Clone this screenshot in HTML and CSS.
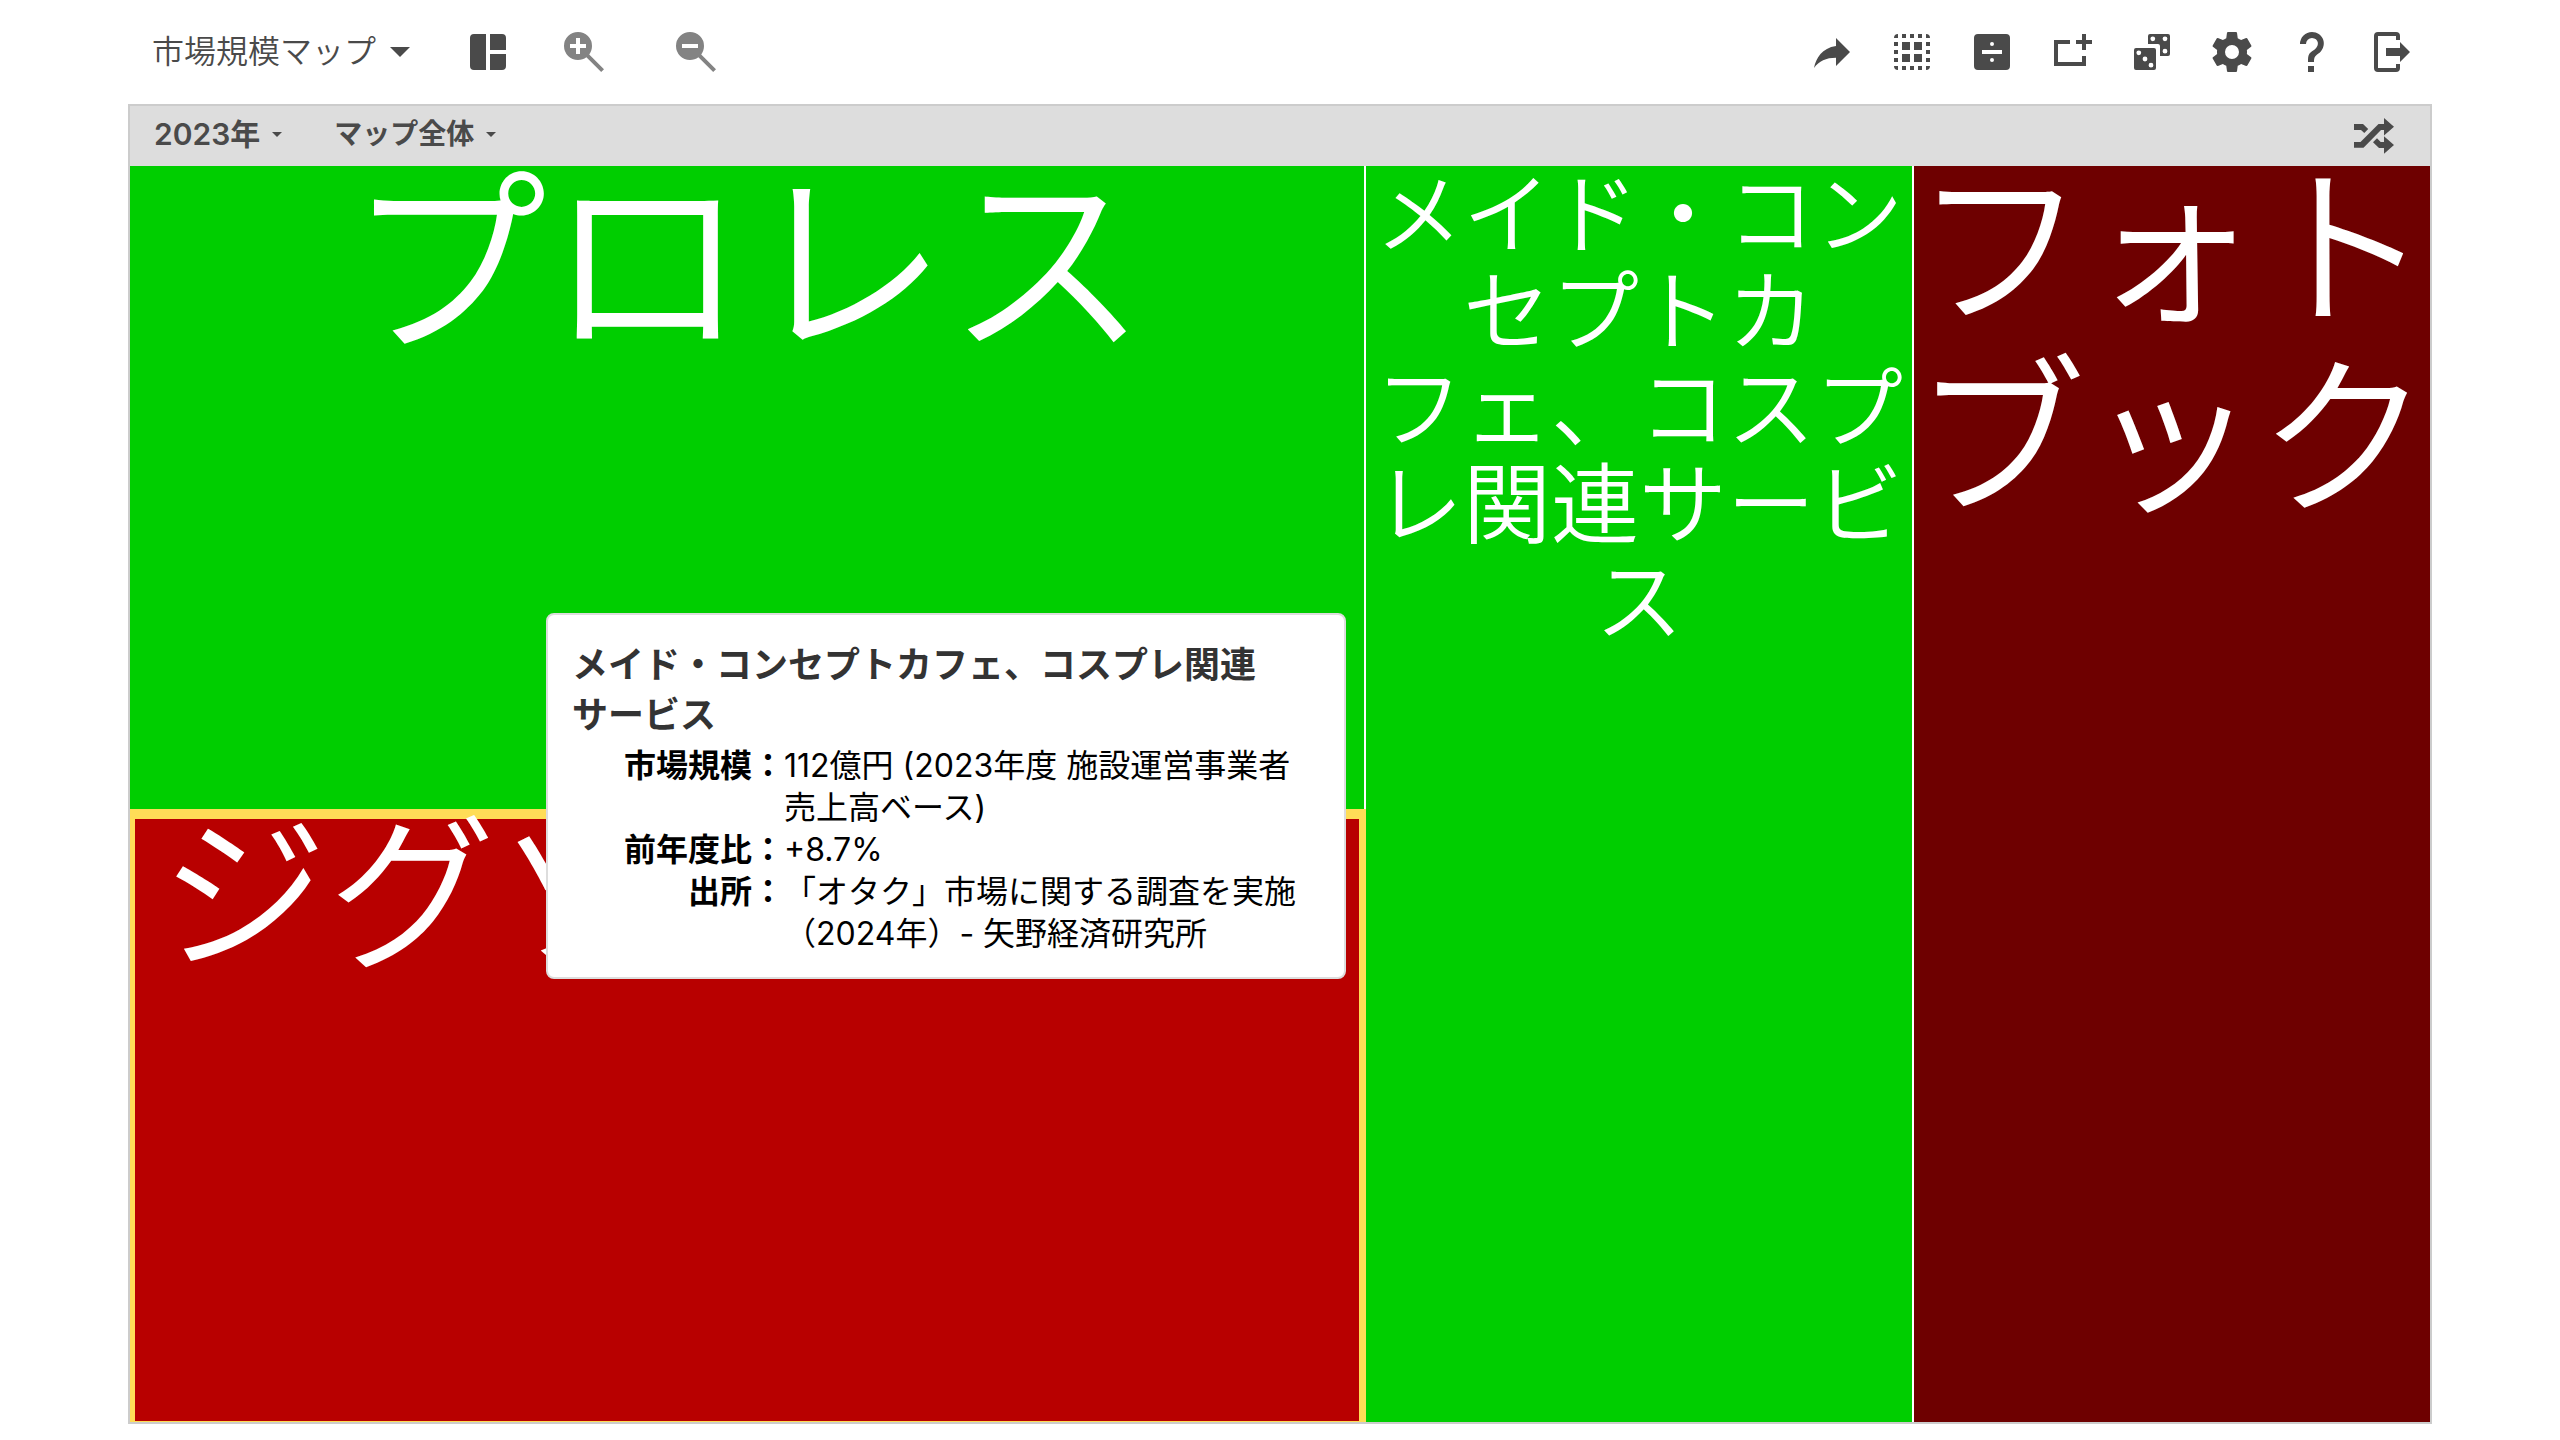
FILE: index.html
```html
<!DOCTYPE html>
<html lang="ja">
<head>
<meta charset="utf-8">
<title>市場規模マップ</title>
<link rel="stylesheet" href="styles.css">
</head>
<body>
<header class="toolbar">
  <button class="map-menu" type="button">市場規模マップ<svg class="caret" viewBox="0 0 20 10" aria-hidden="true"><path d="M0 0H20L10 10Z"/></svg></button>
  <div class="view-tools">
    <button class="icon-button" type="button" aria-label="レイアウト"><svg class="icon" viewBox="0 0 24 24"><path d="M5 3H11V21H5A2 2 0 0 1 3 19V5A2 2 0 0 1 5 3ZM13 3H19A2 2 0 0 1 21 5V11H13ZM13 13H21V19A2 2 0 0 1 19 21H13Z"/></svg></button>
    <button class="icon-button zoom" type="button" aria-label="拡大"><svg class="icon" viewBox="0 0 24 24"><path d="M9 2A7 7 0 0 1 16 9C16 10.57 15.5 12 14.61 13.19L22 20.59L20.59 22L13.19 14.61C12 15.5 10.57 16 9 16A7 7 0 0 1 9 2ZM8 5V8H5V10H8V13H10V10H13V8H10V5Z"/></svg></button>
    <button class="icon-button zoom zoom-out" type="button" aria-label="縮小"><svg class="icon" viewBox="0 0 24 24"><path d="M9 2A7 7 0 0 1 16 9C16 10.57 15.5 12 14.61 13.19L22 20.59L20.59 22L13.19 14.61C12 15.5 10.57 16 9 16A7 7 0 0 1 9 2ZM5 8V10H13V8Z"/></svg></button>
  </div>
  <div class="actions">
    <button class="icon-button" type="button" aria-label="共有"><svg class="icon" viewBox="0 0 24 24"><path d="M14 9V5L21 12L14 19V14.9C9 14.9 5.5 16.5 3 20C4 15 7 10 14 9Z"/></svg></button>
    <button class="icon-button" type="button" aria-label="すべて選択"><svg class="icon" viewBox="0 0 24 24"><path d="M3 5A2 2 0 0 1 5 3V5ZM7 3H9V5H7ZM11 3H13V5H11ZM15 3H17V5H15ZM19 3A2 2 0 0 1 21 5H19ZM3 7H5V9H3ZM3 11H5V13H3ZM3 15H5V17H3ZM19 7H21V9H19ZM19 11H21V13H19ZM19 15H21V17H19ZM3 19H5V21A2 2 0 0 1 3 19ZM7 19H9V21H7ZM11 19H13V21H11ZM15 19H17V21H15ZM19 19H21A2 2 0 0 1 19 21ZM7 7H11V11H7ZM13 7H17V11H13ZM7 13H11V17H7ZM13 13H17V17H13Z"/></svg></button>
    <button class="icon-button" type="button" aria-label="割り算"><svg class="icon" viewBox="0 0 24 24"><path fill-rule="evenodd" d="M5 3H19A2 2 0 0 1 21 5V19A2 2 0 0 1 19 21H5A2 2 0 0 1 3 19V5A2 2 0 0 1 5 3ZM7 11V13H17V11ZM12 7A1 1 0 0 0 12 9A1 1 0 0 0 12 7ZM12 15A1 1 0 0 0 12 17A1 1 0 0 0 12 15Z"/></svg></button>
    <button class="icon-button" type="button" aria-label="追加"><svg class="icon" viewBox="0 0 24 24"><path d="M3 6H11V8H5V17H17V14H19V19H3ZM17 3H19V6H22V8H19V11H17V8H14V6H17Z"/></svg></button>
    <button class="icon-button" type="button" aria-label="ランダム"><svg class="icon" viewBox="0 0 24 24"><path fill-rule="evenodd" d="M4 10H13A1 1 0 0 1 14 11V20A1 1 0 0 1 13 21H4A1 1 0 0 1 3 20V11A1 1 0 0 1 4 10ZM5.4 11.2A1.2 1.2 0 0 0 5.4 13.6A1.2 1.2 0 0 0 5.4 11.2ZM8.5 14.3A1.2 1.2 0 0 0 8.5 16.7A1.2 1.2 0 0 0 8.5 14.3ZM11.5 17.4A1.2 1.2 0 0 0 11.5 19.8A1.2 1.2 0 0 0 11.5 17.4ZM11 3H20A1 1 0 0 1 21 4V13A1 1 0 0 1 20 14H16V9A1 1 0 0 0 15 8H10V4A1 1 0 0 1 11 3ZM12.4 4.2A1.2 1.2 0 0 0 12.4 6.6A1.2 1.2 0 0 0 12.4 4.2ZM18.5 4.2A1.2 1.2 0 0 0 18.5 6.6A1.2 1.2 0 0 0 18.5 4.2ZM18.5 10.4A1.2 1.2 0 0 0 18.5 12.8A1.2 1.2 0 0 0 18.5 10.4Z"/></svg></button>
    <button class="icon-button" type="button" aria-label="設定"><svg class="icon" viewBox="0 0 24 24"><path d="M12,15.5A3.5,3.5 0 0,1 8.5,12A3.5,3.5 0 0,1 12,8.5A3.5,3.5 0 0,1 15.5,12A3.5,3.5 0 0,1 12,15.5M19.43,12.97C19.47,12.65 19.5,12.33 19.5,12C19.5,11.67 19.47,11.34 19.43,11L21.54,9.37C21.73,9.22 21.78,8.95 21.66,8.73L19.66,5.27C19.54,5.05 19.27,4.96 19.05,5.05L16.56,6.05C16.04,5.66 15.5,5.32 14.87,5.07L14.5,2.42C14.46,2.18 14.25,2 14,2H10C9.75,2 9.54,2.18 9.5,2.42L9.13,5.07C8.5,5.32 7.96,5.66 7.44,6.05L4.95,5.05C4.73,4.96 4.46,5.05 4.34,5.27L2.34,8.73C2.21,8.95 2.27,9.22 2.46,9.37L4.57,11C4.53,11.34 4.5,11.67 4.5,12C4.5,12.33 4.53,12.65 4.57,12.97L2.46,14.63C2.27,14.78 2.21,15.05 2.34,15.27L4.34,18.73C4.46,18.95 4.73,19.03 4.95,18.95L7.44,17.94C7.96,18.34 8.5,18.68 9.13,18.93L9.5,21.58C9.54,21.82 9.75,22 10,22H14C14.25,22 14.46,21.82 14.5,21.58L14.87,18.93C15.5,18.67 16.04,18.34 16.56,17.94L19.05,18.95C19.27,19.03 19.54,18.95 19.66,18.73L21.66,15.27C21.78,15.05 21.73,14.78 21.54,14.63L19.43,12.97Z"/></svg></button>
    <button class="icon-button" type="button" aria-label="ヘルプ"><svg class="icon" viewBox="0 0 24 24"><path d="M10,19H13V22H10V19M12,2C17.35,2.22 19.68,7.62 16.5,11.67C15.67,12.67 14.33,13.33 13.67,14.17C13,15 13,16 13,17H10C10,15.33 10,13.92 10.67,12.92C11.33,11.92 12.67,11.33 13.5,10.67C15.92,8.43 15.32,5.26 12,5A3,3 0 0,0 9,8H6A6,6 0 0,1 12,2Z"/></svg></button>
    <button class="icon-button" type="button" aria-label="終了"><svg class="icon" viewBox="0 0 24 24"><path d="M5 2H14A2 2 0 0 1 16 4V6H14V4H5V20H14V18H16V20A2 2 0 0 1 14 22H5A2 2 0 0 1 3 20V4A2 2 0 0 1 5 2ZM9 10H16V7L21 12L16 17V14H9Z"/></svg></button>
  </div>
</header>
<main class="map">
  <nav class="filter-bar">
    <button class="filter filter-year" type="button">2023年<svg class="small-caret" viewBox="0 0 10 5" aria-hidden="true"><path d="M0 0H10L5 5Z"/></svg></button>
    <button class="filter" type="button">マップ全体<svg class="small-caret" viewBox="0 0 10 5" aria-hidden="true"><path d="M0 0H10L5 5Z"/></svg></button>
    <button class="shuffle" type="button" aria-label="シャッフル"><svg class="shuffle-icon" viewBox="0 0 40 36"><path d="M0 6H9L14.2 11L10.3 15L7 12H0ZM0 24H6.5L24.5 6H30V0L40 8.7L30 17.5V12H27L9.5 29.7H0ZM23 20.3L26.7 24H30V18.3L40 27L30 35.7V30H25L19 24.3Z"/></svg></button>
  </nav>
  <section class="treemap">
    <div class="column">
      <div class="cell up wrestling"><div class="label">プロレス</div></div>
      <div class="cell down puzzle selected"><div class="label">ジグソーパズル</div></div>
    </div>
    <div class="cell up maid">メイド・コンセプトカフェ、コスプレ関連サービス</div>
    <div class="cell deep photobook"><div class="label">フォトブック</div></div>
    <aside class="tooltip" role="tooltip">
      <h2 class="tooltip-title">メイド・コンセプトカフェ、コスプレ関連サービス</h2>
      <table class="details">
        <tr><th scope="row">市場規模：</th><td>112億円 (2023年度 施設運営事業者売上高ベース)</td></tr>
        <tr><th scope="row">前年度比：</th><td>+8.7%</td></tr>
        <tr><th scope="row">出所：</th><td>「オタク」市場に関する調査を実施（2024年）- 矢野経済研究所</td></tr>
      </table>
    </aside>
  </section>
</main>
</body>
</html>
```
FILE: styles.css
```css
* {
  box-sizing: border-box;
}

body {
  display: flex;
  flex-direction: column;
  min-height: 100vh;
  margin: 0;
  padding: 0 5% 16px;
  background: #fff;
  color: #4a4a4a;
  font-family: "Inter", "Noto Sans CJK JP", sans-serif;
  line-break: strict;
}

button {
  padding: 0;
  border: 0;
  background: none;
  color: inherit;
  font: inherit;
  cursor: pointer;
}

svg {
  display: block;
  fill: currentColor;
}

.toolbar {
  display: flex;
  align-items: center;
  height: 104px;
  padding: 0 0 0 24px;
}

.map-menu {
  display: flex;
  align-items: center;
  gap: 14px;
  font-size: 32px;
  font-weight: 350;
  line-height: 48px;
}

.caret {
  width: 20px;
  height: 10px;
}

.view-tools {
  display: flex;
  gap: 48px;
  margin-left: 54px;
}

.icon-button {
  width: 48px;
  height: 48px;
}

.icon {
  width: 48px;
  height: 48px;
}

.zoom {
  color: #838383;
}

.zoom-out {
  margin-left: 16px;
}

.actions {
  display: flex;
  gap: 32px;
  margin-left: auto;
  padding-right: 16px;
}

.map {
  display: flex;
  flex: 1;
  flex-direction: column;
  border: 2px solid #ccc;
}

.filter-bar {
  display: flex;
  align-items: center;
  gap: 52px;
  height: 60px;
  padding: 0 36px 0 24px;
  background: #ddd;
}

.filter {
  display: flex;
  align-items: center;
  gap: 12px;
  padding-bottom: 4px;
  font-size: 28px;
  font-weight: 600;
  line-height: 40px;
}

.filter-year {
  font-size: 30px;
}

.small-caret {
  width: 10px;
  height: 5px;
}

.shuffle {
  margin-left: auto;
}

.shuffle-icon {
  width: 40px;
  height: 36px;
}

.treemap {
  position: relative;
  display: grid;
  flex: 1;
  grid-template-columns: 1234fr 546fr 516fr;
  gap: 2px;
}

.column {
  display: grid;
  grid-template-rows: 643fr 613fr;
}

.cell {
  color: #fff;
  font-weight: 350;
  line-height: 1.1;
  text-align: center;
}

.label {
  margin-top: -12px;
}

.up {
  background: #00ce00;
}

.down {
  background: #b80000;
}

.deep {
  background: #6e0000;
}

.wrestling {
  font-size: 200px;
}

.puzzle {
  font-size: 168px;
}

.selected {
  margin-right: -2px;
  border: solid #ffdd57;
  border-width: 10px 7px 1px 5px;
}

.selected .label {
  margin-top: -16px;
}

.maid {
  font-size: 88px;
}

.photobook {
  font-size: 172px;
}

.tooltip {
  position: absolute;
  top: 447px;
  left: 416px;
  width: 800px;
  padding: 25px 24px 22px;
  border: 2px solid #ddd;
  border-radius: 8px;
  background: #fff;
  color: #000;
}

.tooltip-title {
  margin: 0 0 5px;
  color: #333;
  font-size: 36px;
  font-weight: 600;
  line-height: 50px;
}

.details {
  border-spacing: 0;
  font-size: 32px;
  line-height: 42px;
}

.details th {
  width: 212px;
  padding: 0;
  font-weight: 600;
  text-align: right;
  vertical-align: top;
  white-space: nowrap;
}

.details td {
  padding: 0 12px 0 0;
  font-weight: 400;
}
```
